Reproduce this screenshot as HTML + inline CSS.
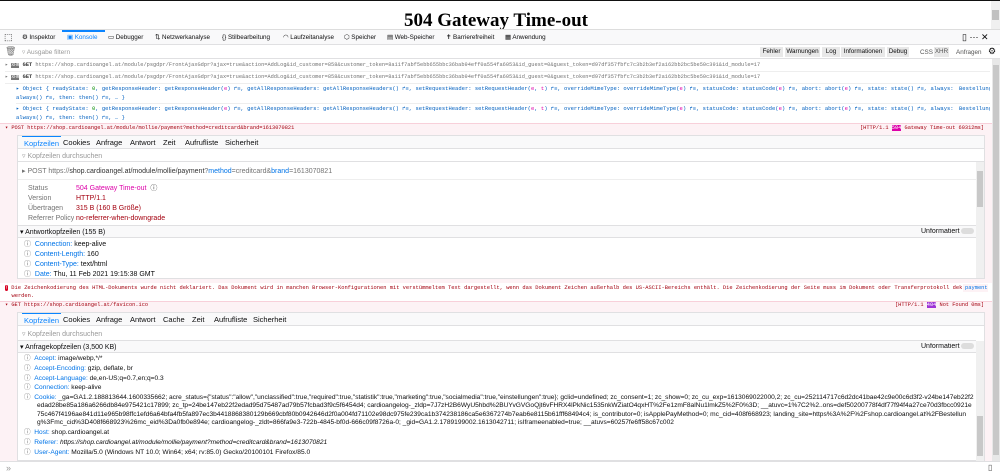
<!DOCTYPE html>
<html><head><meta charset="utf-8"><style>
*{margin:0;padding:0;box-sizing:border-box}
body{width:1000px;height:475px;overflow:hidden;background:#fff;position:relative;font-family:"Liberation Sans",sans-serif;font-size:7px;color:#0c0c0d}
.a{position:absolute;white-space:nowrap;overflow:hidden}
.m{font-family:"Liberation Mono",monospace;font-size:5.3px}
.b{color:#0074e8}.g{color:#737373}.r{color:#a4000f}.p{color:#dd00a9}
.tab{position:absolute;top:0;font-size:7.5px}
.tb{position:absolute;top:4px}
.fb{position:absolute;top:2px;height:10px;background:#e8e8e8;font-size:6.3px;line-height:10px;text-align:center}
</style></head><body>
<div class="a" style="left:0;top:0;width:1000px;height:1px;background:#111"></div>
<div class="a" style="left:0;top:10px;width:1000px;text-align:center;font:bold 19px 'Liberation Serif',serif;color:#000;padding-right:8px">504 Gateway Time-out</div>
<div class="a" style="left:991px;top:1px;width:9px;height:28px;background:#f0f0f0"></div>
<div class="a" style="left:992px;top:10px;width:7px;height:10px;background:#c1c1c1"></div>
<!-- toolbar -->
<div class="a" style="left:0;top:29px;width:1000px;height:16px;background:#f9f9fa;border-top:1px solid #ddd;border-bottom:1px solid #e0e0e2;font-size:6.3px">
<span class="tb" style="left:4px;top:2px;font-size:9px">⬚</span>
<span class="tb" style="left:22px">⚙ Inspektor</span>
<span class="a" style="left:62px;top:0;height:15px;width:43px;border-top:2px solid #0a84ff;color:#0a84ff;padding:2px 0 0 5px">▣ Konsole</span>
<span class="tb" style="left:108px">▭ Debugger</span>
<span class="tb" style="left:155px">⇅ Netzwerkanalyse</span>
<span class="tb" style="left:222px">{} Stilbearbeitung</span>
<span class="tb" style="left:283px">◠ Laufzeitanalyse</span>
<span class="tb" style="left:344px">⬡ Speicher</span>
<span class="tb" style="left:387px">▤ Web-Speicher</span>
<span class="tb" style="left:446px">✝ Barrierefreiheit</span>
<span class="tb" style="left:505px">▦ Anwendung</span>
<span class="a" style="left:962px;top:2px;font-size:9px">▯ ⋯ ✕</span>
</div>
<!-- filter -->
<div class="a" style="left:0;top:45px;width:1000px;height:14px;border-bottom:1px solid #e0e0e2">
<span class="a g" style="left:5px;top:1px;font-size:9px">🗑</span>
<span class="a" style="left:22px;top:3px;color:#999;font-size:6.5px">▿ Ausgabe filtern</span>
<span class="fb" style="left:760px;width:23px">Fehler</span>
<span class="fb" style="left:785px;width:35px">Warnungen</span>
<span class="fb" style="left:822px;width:18px">Log</span>
<span class="fb" style="left:841px;width:44px">Informationen</span>
<span class="fb" style="left:887px;width:22px">Debug</span>
<span class="a" style="left:920px;top:4px;font-size:6.3px;color:#555">CSS</span>
<span class="fb" style="left:934px;width:15px;color:#555">XHR</span>
<span class="a" style="left:956px;top:4px;font-size:6.3px;color:#555">Anfragen</span>
<span class="a" style="left:988px;top:1px;font-size:9px">⚙</span>
</div>
<!-- console right scrollbar -->
<div class="a" style="left:992px;top:59px;width:8px;height:403px;background:#e8e8e8"></div>
<div class="a" style="left:993px;top:65px;width:6px;height:390px;background:#c8c8c8"></div>
<!-- GET rows -->
<div class="a m g" style="left:5px;top:60px;width:985px;height:12px;border-bottom:1px solid #eee;line-height:10px">▸ <span style="background:#777;color:#fff;font-size:4.5px">XHR</span> <b style="color:#333">GET</b> https://shop.cardioangel.at/module/psgdpr/FrontAjaxGdpr?ajax=true&amp;action=AddLog&amp;id_customer=858&amp;customer_token=8a11f7abf5ebb655bbc36bab94eff0a554fa6053&amp;id_guest=0&amp;guest_token=d97df357fbfc7c3b2b3ef2a162bb2bc5be50c391&amp;id_module=17</div>
<div class="a m g" style="left:5px;top:72px;width:985px;height:12px;border-bottom:1px solid #eee;line-height:11px">▸ <span style="background:#777;color:#fff;font-size:4.5px">XHR</span> <b style="color:#333">GET</b> https://shop.cardioangel.at/module/psgdpr/FrontAjaxGdpr?ajax=true&amp;action=AddLog&amp;id_customer=858&amp;customer_token=8a11f7abf5ebb655bbc36bab94eff0a554fa6053&amp;id_guest=0&amp;guest_token=d97df357fbfc7c3b2b3ef2a162bb2bc5be50c391&amp;id_module=17</div>
<div class="a m b" style="left:16px;top:84px;width:974px;height:20px;border-bottom:1px solid #eee;line-height:9px;color:#0060c0;font-size:5.5px">▸ Object { readyState: <span style="color:#058b00">0</span>, getResponseHeader: getResponseHeader(<span class="p">e</span>) ↱≡, getAllResponseHeaders: getAllResponseHeaders() ↱≡, setRequestHeader: setRequestHeader(<span class="p">e</span>, <span class="p">t</span>) ↱≡, overrideMimeType: overrideMimeType(<span class="p">e</span>) ↱≡, statusCode: statusCode(<span class="p">e</span>) ↱≡, abort: abort(<span class="p">e</span>) ↱≡, state: state() ↱≡, always:<span style="position:absolute;left:940px;top:0;background:#fff;padding-left:3px">Bestellung:3189:33</span><br>always() ↱≡, then: then() ↱≡, … }</div>
<div class="a m b" style="left:16px;top:104px;width:974px;height:20px;line-height:9px;color:#0060c0;font-size:5.5px">▸ Object { readyState: <span style="color:#058b00">0</span>, getResponseHeader: getResponseHeader(<span class="p">e</span>) ↱≡, getAllResponseHeaders: getAllResponseHeaders() ↱≡, setRequestHeader: setRequestHeader(<span class="p">e</span>, <span class="p">t</span>) ↱≡, overrideMimeType: overrideMimeType(<span class="p">e</span>) ↱≡, statusCode: statusCode(<span class="p">e</span>) ↱≡, abort: abort(<span class="p">e</span>) ↱≡, state: state() ↱≡, always:<span style="position:absolute;left:940px;top:0;background:#fff;padding-left:3px">Bestellung:3189:33</span><br>always() ↱≡, then: then() ↱≡, … }</div>
<!-- POST block -->
<div class="a" style="left:0;top:123px;width:992px;height:160px;background:#fdf2f5;border-top:1px solid #f8d0da"></div>
<div class="a m r" style="left:5px;top:125px;width:800px">▾ POST https://shop.cardioangel.at/module/mollie/payment?method=creditcard&amp;brand=1613070821</div>
<div class="a m r" style="left:860px;top:125px">[HTTP/1.1 <span style="background:#dd00a9;color:#fff">504</span> Gateway Time-out 60312ms]</div>
<div class="a" style="left:17px;top:135px;width:968px;height:144px;background:#fff;border:1px solid #e0e0e2"></div>
<div class="a" style="left:18px;top:136px;width:966px;height:13px;background:#f9f9fa;border-bottom:1px solid #e0e0e2">
<span class="tab" style="left:4px;top:-1px;height:12px;padding:2px 2px 0;border-top:2px solid #0a84ff;color:#0a84ff">Kopfzeilen</span>
<span class="tab" style="left:45px;top:2px">Cookies</span><span class="tab" style="left:78px;top:2px">Anfrage</span><span class="tab" style="left:112px;top:2px">Antwort</span><span class="tab" style="left:145px;top:2px">Zeit</span><span class="tab" style="left:167px;top:2px">Aufrufliste</span><span class="tab" style="left:207px;top:2px">Sicherheit</span></div>
<div class="a" style="left:22px;top:152px;color:#999">▿ Kopfzeilen durchsuchen</div>
<div class="a" style="left:18px;top:161px;width:966px;border-top:1px solid #e0e0e2"></div>
<div class="a g" style="left:22px;top:167px">▸ POST https://<span style="color:#333">shop.cardioangel.at/module/mollie/payment</span>?<span class="b">method</span>=creditcard&amp;<span class="b">brand</span>=1613070821</div>
<div class="a" style="left:18px;top:179px;width:958px;border-top:1px solid #eee"></div>
<div class="a" style="left:976px;top:162px;width:8px;height:116px;background:#f0f0f0"></div>
<div class="a" style="left:977px;top:171px;width:6px;height:36px;background:#c8c8c8"></div>
<div class="a g" style="left:28px;top:184px;line-height:10px">Status<br>Version<br>Übertragen<br>Referrer Policy</div>
<div class="a r" style="left:76px;top:184px;line-height:10px"><span class="p">504 Gateway Time-out</span> &nbsp;<span style="color:#333">ⓘ</span><br>HTTP/1.1<br>315 B (160 B Größe)<br>no-referrer-when-downgrade</div>
<div class="a" style="left:18px;top:225px;width:958px;height:13px;background:#f9f9fa;border-top:1px solid #e0e0e2;border-bottom:1px solid #e0e0e2"><span class="a" style="left:2px;top:2px">▾ Antwortkopfzeilen (155 B)</span><span class="a" style="left:903px;top:2px">Unformatiert <span style="display:inline-block;width:13px;height:6px;border-radius:3px;background:#ddd;vertical-align:middle"></span></span></div>
<div class="a" style="left:24px;top:240px;line-height:10px"><span class="g">ⓘ</span> &nbsp;<span class="b">Connection:</span> keep-alive<br><span class="g">ⓘ</span> &nbsp;<span class="b">Content-Length:</span> 160<br><span class="g">ⓘ</span> &nbsp;<span class="b">Content-Type:</span> text/html<br><span class="g">ⓘ</span> &nbsp;<span class="b">Date:</span> Thu, 11 Feb 2021 19:15:38 GMT</div>
<!-- error -->
<div class="a m r" style="left:5px;top:284px;width:985px;line-height:8px;font-size:5.4px"><span style="color:#fff;background:#d70022;border-radius:3px;font-size:5px">!</span> Die Zeichenkodierung des HTML-Dokuments wurde nicht deklariert. Das Dokument wird in manchen Browser-Konfigurationen mit verstümmeltem Text dargestellt, wenn das Dokument Zeichen außerhalb des US-ASCII-Bereichs enthält. Die Zeichenkodierung der Seite muss im Dokument oder Transferprotokoll deklariert<span class="b" style="position:absolute;left:958px;top:0;background:#fdf2f5;padding-left:2px">payment</span><br>&nbsp;&nbsp;werden.</div>
<!-- GET favicon -->
<div class="a" style="left:0;top:301px;width:992px;height:160px;background:#fdf2f5;border-top:1px solid #f8d0da"></div>
<div class="a m r" style="left:5px;top:302px">▾ GET https://shop.cardioangel.at/favicon.ico</div>
<div class="a m r" style="left:895px;top:302px">[HTTP/1.1 <span style="background:#9e34d6;color:#fff">404</span> Not Found 0ms]</div>
<div class="a" style="left:17px;top:312px;width:968px;height:149px;background:#fff;border:1px solid #e0e0e2"></div>
<div class="a" style="left:18px;top:313px;width:966px;height:13px;background:#f9f9fa;border-bottom:1px solid #e0e0e2">
<span class="tab" style="left:4px;top:-1px;height:12px;padding:2px 2px 0;border-top:2px solid #0a84ff;color:#0a84ff">Kopfzeilen</span>
<span class="tab" style="left:45px;top:2px">Cookies</span><span class="tab" style="left:78px;top:2px">Anfrage</span><span class="tab" style="left:112px;top:2px">Antwort</span><span class="tab" style="left:145px;top:2px">Cache</span><span class="tab" style="left:174px;top:2px">Zeit</span><span class="tab" style="left:196px;top:2px">Aufrufliste</span><span class="tab" style="left:235px;top:2px">Sicherheit</span></div>
<div class="a" style="left:22px;top:330px;color:#999">▿ Kopfzeilen durchsuchen</div>
<div class="a" style="left:18px;top:340px;width:958px;height:13px;background:#f9f9fa;border-top:1px solid #e0e0e2;border-bottom:1px solid #e0e0e2"><span class="a" style="left:2px;top:2px">▾ Anfragekopfzeilen (3,500 KB)</span><span class="a" style="left:903px;top:2px">Unformatiert <span style="display:inline-block;width:13px;height:6px;border-radius:3px;background:#ddd;vertical-align:middle"></span></span></div>
<div class="a" style="left:976px;top:341px;width:8px;height:120px;background:#f0f0f0"></div>
<div class="a" style="left:977px;top:416px;width:6px;height:40px;background:#c8c8c8"></div>
<div class="a" style="left:24px;top:354px;width:950px;line-height:9.8px;font-size:6.6px;white-space:normal">
<span class="g">ⓘ</span> &nbsp;<span class="b">Accept:</span> image/webp,*/*<br>
<span class="g">ⓘ</span> &nbsp;<span class="b">Accept-Encoding:</span> gzip, deflate, br<br>
<span class="g">ⓘ</span> &nbsp;<span class="b">Accept-Language:</span> de,en-US;q=0.7,en;q=0.3<br>
<span class="g">ⓘ</span> &nbsp;<span class="b">Connection:</span> keep-alive<br>
<div style="line-height:8.3px;padding:1px 0 1px 13px;text-indent:-13px;white-space:normal;word-break:break-all"><span class="g">ⓘ</span> &nbsp;<span class="b">Cookie:</span> _ga=GA1.2.188813644.1600335662; acre_status={"status":"allow","unclassified":true,"required":true,"statistik":true,"marketing":true,"socialmedia":true,"einstellungen":true}; gclid=undefined; zc_consent=1; zc_show=0; zc_cu_exp=1613069022000,2; zc_cu=252114717c6d2dc41bae42c9e00c6d3f2-v24be147eb22f2edad28be85a186a6266db84e975421c17899; zc_tp=24be147eb22f2edad95d75487ad79b57fcbad3f9c5f6454d4; cardioangelog-_zldp=7J7zH2B6WyU5hbd%2BUYvGVGoQjt6vFHRX4lPkNic1535nkWZiatO4qxHT%2Fe1zmF8alNu1lmkZ5%2F0%3D; __atuvc=1%7C2%2..ons=def50200778f4df77f94f4a27ce70d3fbcc0921e75c467f4196ae841d11e965b98ffc1efd6a64bfa4fb5fa897ec3b4418868380129b669cbf80b0942646d2f0a004fd71102e98dc975fe239ca1b374238186ca5e6367274b7eab6e8115b61fff68494c4; is_contributor=0; isApplePayMethod=0; mc_cid=408f668923; landing_site=https%3A%2F%2Fshop.cardioangel.at%2FBestellung%3Fmc_cid%3D408f668923%26mc_eid%3Da0fb0e894e; cardioangelog-_zldt=866fa9e3-722b-4845-bf0d-666c09f8726a-0; _gid=GA1.2.1789199002.1613042711; isIframeenabled=true; __atuvs=60257fe6ff58c67c002</div>
<span class="g">ⓘ</span> &nbsp;<span class="b">Host:</span> shop.cardioangel.at<br>
<span class="g">ⓘ</span> &nbsp;<span class="b">Referer:</span> <i>https://shop.cardioangel.at/module/mollie/payment?method=creditcard&amp;brand=1613070821</i><br>
<span class="g">ⓘ</span> &nbsp;<span class="b">User-Agent:</span> Mozilla/5.0 (Windows NT 10.0; Win64; x64; rv:85.0) Gecko/20100101 Firefox/85.0
</div>
<!-- input -->
<div class="a" style="left:0;top:461px;width:1000px;height:14px;background:#fff;border-top:1px solid #e0e0e2"><span class="a" style="left:6px;top:1px;color:#999;font-size:9px">»</span><span class="a" style="left:988px;top:1px;font-size:8px;color:#555">▯</span></div>
</body></html>
